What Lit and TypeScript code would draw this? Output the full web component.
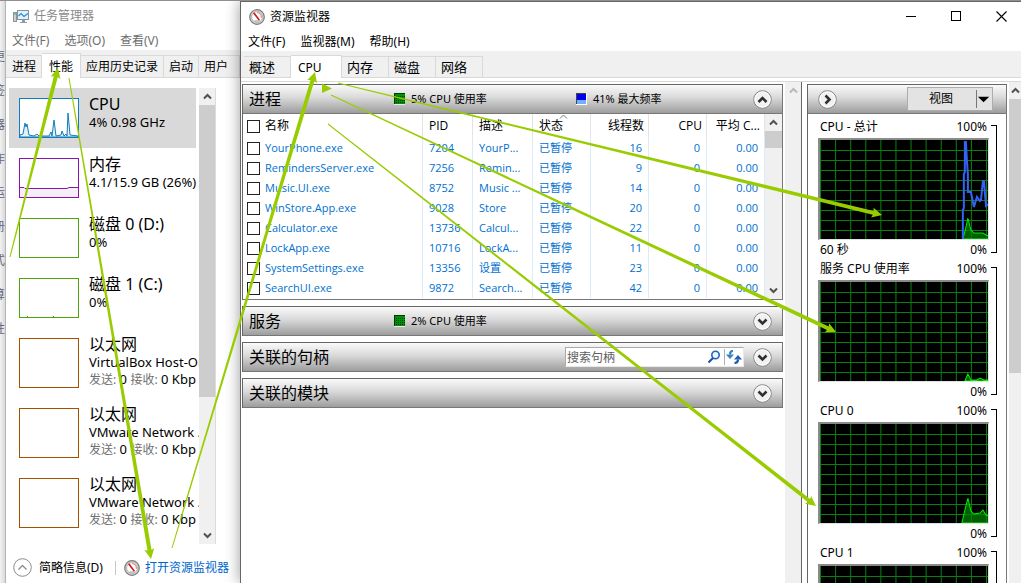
import { LitElement, html, svg, css } from "lit";
import { customElement, property } from "lit/decorators.js";

const reset = css`
  :host {
    display: block;
    box-sizing: border-box;
  }
  * {
    box-sizing: border-box;
  }
  button {
    font: inherit;
    color: inherit;
    background: none;
    border: 0;
    padding: 0;
    margin: 0;
    white-space: nowrap;
  }
  svg {
    display: block;
    flex: none;
  }
`;

const gauge = svg`
  <circle cx="8" cy="8" r="7.3" fill="#d4d4d4" stroke="#7c7c7c" stroke-width="1.2"/>
  <circle cx="8" cy="8" r="5.4" fill="#fff" stroke="#a8a8a8" stroke-width=".8"/>
  <path d="M8 3.6a4.500 4.500 0 0 1 4.300 5.200" fill="none" stroke="#e08060" stroke-width="1"/>
  <path d="M4 4.200 5.400 3.200 11 10.800 9.800 11.800Z" fill="#d01818"/>
  <path d="M5.500 12h5" stroke="#999" stroke-width="1"/>`;

const gaugeIcon = html`<svg width="16" height="16" viewBox="0 0 16 16" aria-hidden="true">${gauge}</svg>`;

@customElement("scroll-bar")
class ScrollBar extends LitElement {
  @property({ type: Number }) thumb = 0;
  @property({ type: Boolean }) idle = false;
  @property({ type: Boolean }) endless = false;
  static styles = [
    reset,
    css`
      :host {
        display: flex;
        flex-direction: column;
        background: #f0f0f0;
        flex: none;
        width: 16px;
        overflow: hidden;
      }
      .arrow {
        height: 17px;
        flex: none;
        display: flex;
        align-items: center;
        justify-content: center;
      }
      .thumb {
        background: #cdcdcd;
        flex: none;
      }
      .space {
        flex: 1;
        min-height: 0;
      }
    `,
  ];
  chevron(d: string) {
    return html`<svg width="9" height="7" viewBox="0 0 9 7" aria-hidden="true">
      <path d=${d} fill="none" stroke=${this.idle ? "#b8b8b8" : "#505050"} stroke-width="2" />
    </svg>`;
  }
  render() {
    return html`
      <button class="arrow" aria-label="向上滚动">${this.chevron("M1 5.5 4.5 2 8 5.5")}</button>
      <div class="thumb" style="height:${this.thumb}px"></div>
      <div class="space"></div>
      ${this.endless
        ? ""
        : html`<button class="arrow" aria-label="向下滚动">${this.chevron("M1 1.5 4.5 5 8 1.5")}</button>`}
    `;
  }
}

@customElement("round-button")
class RoundButton extends LitElement {
  @property() dir = "down";
  static styles = [
    reset,
    css`
      button {
        display: block;
      }
    `,
  ];
  render() {
    const d =
      this.dir === "up" ? "M5.5 12 9.5 8 13.5 12" : this.dir === "right" ? "M7.5 5.5 11.5 9.5 7.5 13.5" : "M5.5 7.5 9.5 11.5 13.5 7.5";
    return html`<button aria-label="展开或折叠">
      <svg width="19" height="19" viewBox="0 0 19 19" aria-hidden="true">
        <circle cx="9.5" cy="9.5" r="8.8" fill="#f1f1f1" stroke="#858585" />
        <circle cx="9.5" cy="9.5" r="7.6" fill="none" stroke="#fff" />
        <path d=${d} fill="none" stroke="#303030" stroke-width="2.6" />
      </svg>
    </button>`;
  }
}

interface Perf {
  title: string;
  lines: string[];
  net?: string[];
  color: string;
  kind?: string;
}

const PERF: Perf[] = [
  { title: "CPU", lines: ["4% 0.98 GHz"], color: "#117dbb", kind: "cpu" },
  { title: "内存", lines: ["4.1/15.9 GB (26%)"], color: "#8b12ae", kind: "mem" },
  { title: "磁盘 0 (D:)", lines: ["0%"], color: "#4da60c" },
  { title: "磁盘 1 (C:)", lines: ["0%"], color: "#4da60c", kind: "disk" },
  { title: "以太网", lines: ["VirtualBox Host-Or"], net: ["0", "0 Kbp"], color: "#a74f01" },
  { title: "以太网", lines: ["VMware Network ."], net: ["0", "0 Kbp"], color: "#a74f01" },
  { title: "以太网", lines: ["VMware Network ."], net: ["0", "0 Kbp"], color: "#a74f01" },
];

@customElement("task-manager")
class TaskManager extends LitElement {
  static styles = [
    reset,
    css`
      :host {
        display: flex;
        flex-direction: column;
        background: #fff;
        border-left: 1px solid #b4b4b4;
        overflow: hidden;
      }
      .title {
        display: flex;
        align-items: center;
        gap: 5px;
        height: 30px;
        padding-left: 7px;
        color: #8a8a8a;
      }
      .menu {
        display: flex;
        gap: 15px;
        height: 19px;
        padding-left: 6px;
        color: #6d6d6d;
        line-height: 20px;
      }
      .tabs {
        display: flex;
        align-items: flex-end;
        height: 28px;
        padding-left: 1px;
        background: #f0f0f0;
        border-bottom: 1px solid #d9d9d9;
      }
      .tab {
        height: 22px;
        padding: 0 5px;
        border: 1px solid #d9d9d9;
        border-bottom: 0;
        border-left: 0;
        line-height: 21px;
      }
      .tab.on {
        height: 25px;
        padding: 0 7px;
        background: #fff;
        margin-bottom: -1px;
      }
      .tab.last {
        flex: 1;
        text-align: left;
      }
      .body {
        display: flex;
        flex: 1;
        min-height: 0;
        margin: 10px 24px 0 3px;
        border-right: 1px solid #dcdcdc;
      }
      .list {
        flex: 1;
        min-width: 0;
        overflow: hidden;
      }
      .item {
        display: grid;
        grid-template-columns: 60px 1fr;
        column-gap: 10px;
        padding: 10px 0 10px 10px;
        height: 60px;
        white-space: nowrap;
      }
      .item.on {
        background: #d9d9d9;
        margin-right: 3px;
      }
      .item.net {
        height: 70px;
      }
      .thumb {
        width: 60px;
        height: 100%;
        overflow: visible;
      }
      .text {
        margin-top: -4px;
        min-width: 0;
      }
      .name {
        font-size: 16px;
        line-height: 20px;
      }
      .line {
        font-size: 13px;
        line-height: 17px;
      }
      .key {
        color: #707070;
        font-size: 12px;
      }
      .foot {
        display: flex;
        align-items: center;
        height: 39px;
        flex: none;
        padding: 8px 0 0 7px;
      }
      .fewer {
        display: flex;
        align-items: center;
        gap: 7px;
      }
      .bar {
        width: 1px;
        height: 14px;
        margin: 0 8px 0 12px;
        background: #c8c8c8;
      }
      .open {
        display: flex;
        align-items: center;
        gap: 5px;
        color: #0066cc;
        text-decoration: none;
        white-space: nowrap;
      }
    `,
  ];
  thumb(p: Perf) {
    const h = p.net ? 50 : 40;
    const inner =
      p.kind === "cpu"
        ? svg`<path d="M1 37 4 36 6 25 7 29 8 26 10 37 15 38 18 36 20 38 30 38 32 34 33 38 35 22 37 38 42 37 43 33 45 38 47 36 48 38 49 15 51 37 59 38V39H1Z" fill="#e3f0f8" stroke=${p.color}/>`
        : p.kind === "mem"
          ? svg`<path d="M1 29.5H5L6 30.5H48L50 29.5H59V39H1Z" fill="#f4eff7"/><path d="M1 29.5H5L6 30.5H48L50 29.5H59" fill="none" stroke=${p.color}/>`
          : p.kind === "disk"
            ? svg`<path d="M8 38.5h1M34 38.5h1" stroke=${p.color}/>`
            : "";
    return html`<svg class="thumb" viewBox="0 0 60 ${h}" aria-hidden="true">
      <rect x=".5" y=".5" width="59" height=${h - 1} fill="#fff" stroke=${p.color} />
      ${inner}
    </svg>`;
  }
  render() {
    return html`
      <div class="title">
        <svg width="16" height="16" viewBox="0 0 16 16" aria-hidden="true">
          <rect x=".5" y="4.500" width="3" height="9" fill="#c9d0d4" stroke="#8a949a" />
          <path d="M1 6h2" stroke="#4aa84a" />
          <rect x="4.500" y="2.500" width="11" height="9" fill="#dff1fa" stroke="#87939b" />
          <path d="M5.500 8 8 5.500 11 8.500 15 5.500" fill="none" stroke="#2b8fc4" stroke-width="1.200" />
          <path d="M9 12h3v2h2v1H7v-1h2Z" fill="#8f999f" />
        </svg>
        <span>任务管理器</span>
      </div>
      <nav class="menu">
        <button>文件(F)</button><button>选项(O)</button><button>查看(V)</button>
      </nav>
      <div class="tabs" role="tablist">
        <button class="tab" role="tab">进程</button>
        <button class="tab on" role="tab" aria-selected="true">性能</button>
        <button class="tab" role="tab">应用历史记录</button>
        <button class="tab" role="tab">启动</button>
        <button class="tab last" role="tab">用户</button>
      </div>
      <div class="body">
        <div class="list">
          ${PERF.map(
            (p, i) => html`<div class="item ${i === 0 ? "on" : ""} ${p.net ? "net" : ""}">
              ${this.thumb(p)}
              <div class="text">
                <div class="name">${p.title}</div>
                ${p.lines.map((l) => html`<div class="line">${l}</div>`)}
                ${p.net
                  ? html`<div class="line"><span class="key">发送:</span> ${p.net[0]} <span class="key">接收:</span> ${p.net[1]}</div>`
                  : ""}
              </div>
            </div>`
          )}
        </div>
        <scroll-bar thumb="292"></scroll-bar>
      </div>
      <div class="foot">
        <button class="fewer">
          <svg width="19" height="19" viewBox="0 0 19 19" aria-hidden="true">
            <circle cx="9.500" cy="9.500" r="8.800" fill="#fff" stroke="#8c8c8c" />
            <path d="M5.500 11.500 9.500 7.500 13.500 11.500" fill="none" stroke="#8c8c8c" stroke-width="1.300" />
          </svg>
          <span>简略信息(D)</span>
        </button>
        <span class="bar"></span>
        <a class="open" href="#">${gaugeIcon}<span>打开资源监视器</span></a>
      </div>
    `;
  }
}

const ROWS: [string, string, string, string][] = [
  ["YourPhone.exe", "7204", "YourP...", "16"],
  ["RemindersServer.exe", "7256", "Remin...", "9"],
  ["Music.UI.exe", "8752", "Music ...", "14"],
  ["WinStore.App.exe", "9028", "Store", "20"],
  ["Calculator.exe", "13736", "Calcul...", "22"],
  ["LockApp.exe", "10716", "LockA...", "11"],
  ["SystemSettings.exe", "13356", "设置", "23"],
  ["SearchUI.exe", "9872", "Search...", "42"],
];

@customElement("cpu-graph")
class CpuGraph extends LitElement {
  @property() label = "";
  @property() foot = "";
  @property() fillPath = "";
  @property() linePath = "";
  static styles = [
    reset,
    css`
      :host {
        display: flex;
        height: 142px;
        flex: none;
        padding: 0 9px 0 10px;
      }
      .main {
        flex: 1;
        min-width: 0;
      }
      .row {
        display: flex;
        justify-content: space-between;
        height: 20px;
        padding: 0 2px;
        line-height: 17px;
      }
      .row.low {
        line-height: 20px;
      }
      .plot {
        height: 102px;
        background: #000;
        border: solid #8a8a8a;
        border-width: 2px 0 0 2px;
        border-right: 1px solid #e0e0e0;
        border-bottom: 1px solid #e0e0e0;
      }
      .plot svg {
        width: 100%;
        height: 100%;
      }
      .bracket {
        flex: none;
        width: 6px;
        margin: 7px 0 7px 2px;
        border: 1px solid #000;
        border-left: 0;
      }
    `,
  ];
  render() {
    const vs = [0, 1, 2, 3, 4, 5, 6, 7, 8, 9, 10, 11];
    const hs = [1, 2, 3, 4, 5, 6, 7, 8, 9];
    return html`
      <div class="main">
        <div class="row"><span>${this.label}</span><span>100%</span></div>
        <div class="plot">
          <svg viewBox="0 0 167 99" preserveAspectRatio="none" aria-hidden="true">
            <path d=${this.fillPath} fill="#006000" />
            ${vs.map((i) => svg`<path d="M${i * 15 + 0.5} 0V99" stroke="#0a800f"/>`)}
            ${hs.map((i) => svg`<path d="M0 ${i * 10 + 0.5}H168" stroke="#0a800f"/>`)}
            <path d=${this.fillPath} fill="none" stroke="#00f000" />
            <path d=${this.linePath} fill="none" stroke="#3164f4" stroke-width="2" />
          </svg>
        </div>
        <div class="row low"><span>${this.foot}</span><span>0%</span></div>
      </div>
      <div class="bracket"></div>
    `;
  }
}

@customElement("resource-monitor")
class ResourceMonitor extends LitElement {
  static styles = [
    reset,
    css`
      :host {
        display: flex;
        flex-direction: column;
        background: #fff;
        border: solid #666;
        border-width: 1px 0 0 1px;
        min-width: 0;
        overflow: hidden;
      }
      .title {
        display: flex;
        align-items: center;
        height: 29px;
        gap: 5px;
        padding-left: 8px;
      }
      .title .name {
        flex: 1;
      }
      .ctl {
        display: flex;
        align-items: center;
        justify-content: center;
        width: 40px;
        height: 28px;
      }
      .menu {
        display: flex;
        gap: 15px;
        height: 20px;
        padding-left: 7px;
        line-height: 22px;
      }
      .tabs {
        display: flex;
        align-items: flex-end;
        height: 27px;
        padding-left: 3px;
        background: #f0f0f0;
        border-bottom: 1px solid #d9d9d9;
        flex: none;
      }
      .tab {
        width: 47px;
        height: 21px;
        padding: 0 0 0 5px;
        text-align: left;
        font-size: 13px;
        line-height: 19px;
        border: 1px solid #d9d9d9;
        border-bottom: 0;
        border-left: 0;
      }
      .tab.on {
        width: 51px;
        height: 23px;
        padding-left: 7px;
        font-size: 12px;
        background: #fff;
        margin-bottom: -1px;
      }
      .work {
        display: flex;
        flex: 1;
        min-height: 0;
        margin-top: 3px;
        border-top: 1px solid #d9d9d9;
      }
      .left {
        display: flex;
        flex-direction: column;
        gap: 6px;
        flex: 1;
        min-width: 0;
        padding: 2px 2px 0 1px;
      }
      .panel {
        border: 1px solid #666;
        border-right-color: #777;
        border-bottom-color: #777;
        flex: none;
      }
      .head {
        display: flex;
        align-items: center;
        height: 28px;
        padding: 0 10px 0 6px;
        background: linear-gradient(#fafafa, #d9d9d9 45%, #9d9d9d);
      }
      .head h2 {
        margin: 0;
        width: 145px;
        font-size: 16px;
        font-weight: 400;
        line-height: 28px;
        flex: none;
      }
      .legend {
        display: flex;
        flex: none;
        align-items: center;
        gap: 6px;
        width: 182px;
        font-size: 11px;
        white-space: nowrap;
      }
      .legend.tail {
        width: auto;
      }
      .grow {
        flex: 1;
      }
      .search {
        display: flex;
        align-items: center;
        width: 179px;
        height: 20px;
        margin-right: 9px;
        background: #fff;
        border: 1px solid #aaa;
        border-right-color: #e8e8e8;
        border-bottom-color: #e8e8e8;
      }
      .search input {
        flex: 1;
        min-width: 0;
        height: 18px;
        padding: 0 1px;
        border: 0;
        outline: 0;
        background: none;
        font: inherit;
      }
      .search input::placeholder {
        color: #606060;
        opacity: 1;
      }
      .search .go {
        width: 18px;
        height: 16px;
        border-right: 1px solid #b0b0b0;
      }
      .tablewrap {
        display: flex;
        border-top: 1px solid #777;
        height: 186px;
      }
      .scroll {
        flex: 1;
        min-width: 0;
        overflow: hidden;
      }
      .rows {
        width: 17px;
      }
      table {
        width: 100%;
        table-layout: fixed;
        border-collapse: separate;
        border-spacing: 0;
        font-family: "Open Sans", "Noto Sans CJK SC", sans-serif;
      }
      th,
      td {
        padding: 0 2px 0 6px;
        height: 20px;
        border-right: 1px solid #dcebfb;
        text-align: left;
        font-weight: 400;
        white-space: nowrap;
        line-height: 20px;
      }
      th {
        height: 24px;
        line-height: 24px;
        border-right-color: #e3e3e3;
      }
      td {
        color: #0070d0;
        font-size: 11px;
      }
      th:first-child,
      td:first-child {
        padding: 0 0 0 4px;
      }
      th.n {
        text-align: right;
        padding: 0 4px 0 0;
      }
      td.n {
        text-align: right;
        padding: 0 6px 0 0;
      }
      .c-id {
        width: 50px;
      }
      .c-ds {
        width: 60px;
      }
      .c-n {
        width: 58px;
      }
      label {
        display: flex;
        align-items: center;
        gap: 5px;
      }
      input[type="checkbox"] {
        appearance: none;
        width: 13px;
        height: 13px;
        margin: 0;
        border: 1px solid #222;
        background: #fff;
        flex: none;
      }
      .sorted {
        position: relative;
      }
      .sorted svg {
        position: absolute;
        left: 26px;
        top: 0;
      }
      .right {
        display: flex;
        flex: none;
        width: 220px;
        border-left: 1px solid #666;
      }
      .graphs {
        flex: 1;
        min-width: 0;
        margin: 2px 2px 0 5px;
        border: 1px solid #666;
        border-right-color: #777;
        border-bottom: 0;
        overflow: hidden;
      }
      .graphs .head {
        height: 29px;
        padding: 0 13px 0 10px;
        margin-bottom: 4px;
        border-bottom: 1px solid #777;
        justify-content: space-between;
      }
      .view {
        display: flex;
        align-items: center;
        width: 86px;
        height: 24px;
        background: #e3e3e3;
        border: 1px solid #adadad;
      }
      .view span {
        flex: 1;
        line-height: 22px;
        padding-right: 2px;
      }
      .view svg {
        border-left: 1px solid #777;
      }
      .outer {
        width: 12px;
      }
    `,
  ];
  green = html`<svg width="11" height="12" viewBox="0 0 11 12" aria-hidden="true">
    <rect width="11" height="12" fill="#00900a" />
    <path d="M0 .5h11M.5 0v11" stroke="#003c00" />
    <path d="M2 3.500h9M2 5.500h9M2 7.500h9M2 9.500h9" stroke="#003c00" stroke-dasharray="1 1" />
    <path d="M0 11.500h11" stroke="#e8e8e8" />
  </svg>`;
  blue = html`<svg width="11" height="12" viewBox="0 0 11 12" aria-hidden="true">
    <rect width="11" height="7" fill="#0000f0" />
    <rect y="7" width="11" height="5" fill="#70b0ff" />
    <path d="M0 .5h11M.5 0v12" stroke="#444" />
    <path d="M0 11.500h11M10.500 0v12" stroke="#fff" />
  </svg>`;
  render() {
    return html`
      <div class="title">
        ${gaugeIcon}<span class="name">资源监视器</span>
        <button class="ctl" aria-label="最小化">
          <svg width="11" height="11" viewBox="0 0 11 11"><path d="M0 5.500h10" stroke="#000" /></svg>
        </button>
        <button class="ctl" aria-label="最大化">
          <svg width="11" height="11" viewBox="0 0 11 11"><rect x=".5" y=".5" width="9" height="9" fill="none" stroke="#000" /></svg>
        </button>
        <button class="ctl" aria-label="关闭">
          <svg width="11" height="11" viewBox="0 0 11 11"><path d="M.5.500l10 10M10.500.500l-10 10" stroke="#000" stroke-width="1.100" /></svg>
        </button>
      </div>
      <nav class="menu">
        <button>文件(F)</button><button>监视器(M)</button><button>帮助(H)</button>
      </nav>
      <div class="tabs" role="tablist">
        <button class="tab" role="tab">概述</button>
        <button class="tab on" role="tab" aria-selected="true">CPU</button>
        <button class="tab" role="tab">内存</button>
        <button class="tab" role="tab">磁盘</button>
        <button class="tab" role="tab">网络</button>
      </div>
      <div class="work">
        <div class="left">
          <section class="panel">
            <div class="head">
              <h2>进程</h2>
              <span class="legend">${this.green}<span>5% CPU 使用率</span></span>
              <span class="legend tail">${this.blue}<span>41% 最大频率</span></span>
              <span class="grow"></span>
              <round-button dir="up"></round-button>
            </div>
            <div class="tablewrap">
              <div class="scroll">
                <table>
                  <colgroup>
                    <col />
                    <col class="c-id" />
                    <col class="c-ds" />
                    <col class="c-n" />
                    <col class="c-n" />
                    <col class="c-n" />
                    <col class="c-n" />
                  </colgroup>
                  <thead>
                    <tr>
                      <th><label><input type="checkbox" />名称</label></th>
                      <th>PID</th>
                      <th>描述</th>
                      <th class="sorted">
                        状态
                        <svg width="9" height="5" viewBox="0 0 9 5"><path d="M1 4.500 4.500 1 8 4.500" fill="none" stroke="#777" /></svg>
                      </th>
                      <th class="n">线程数</th>
                      <th class="n">CPU</th>
                      <th class="n">平均 C...</th>
                    </tr>
                  </thead>
                  <tbody>
                    ${ROWS.map(
                      (r) => html`<tr>
                        <td><label><input type="checkbox" />${r[0]}</label></td>
                        <td>${r[1]}</td>
                        <td>${r[2]}</td>
                        <td>已暂停</td>
                        <td class="n">${r[3]}</td>
                        <td class="n">0</td>
                        <td class="n">0.00</td>
                      </tr>`
                    )}
                  </tbody>
                </table>
              </div>
              <scroll-bar class="rows" thumb="17"></scroll-bar>
            </div>
          </section>
          <section class="panel">
            <div class="head">
              <h2>服务</h2>
              <span class="legend">${this.green}<span>2% CPU 使用率</span></span>
              <span class="grow"></span>
              <round-button></round-button>
            </div>
          </section>
          <section class="panel">
            <div class="head">
              <h2>关联的句柄</h2>
              <span class="grow"></span>
              <div class="search">
                <input type="text" placeholder="搜索句柄" aria-label="搜索句柄" />
                <button class="go" aria-label="搜索">
                  <svg width="14" height="14" viewBox="0 0 14 14">
                    <circle cx="8.500" cy="5" r="3.700" fill="#eaf5ff" stroke="#2563b8" stroke-width="1.600" />
                    <path d="M6 8 1.500 12.500" stroke="#1d4fa8" stroke-width="2.200" />
                  </svg>
                </button>
                <button aria-label="刷新">
                  <svg width="18" height="14" viewBox="0 0 18 14">
                    <path d="M8 1Q5 1 5 4.500" fill="none" stroke="#2f83cc" stroke-width="2.200" />
                    <path d="M1 4.500h8L5 9Z" fill="#2f83cc" />
                    <path d="M9.500 13Q13 13 13 9.500" fill="none" stroke="#1f5fb0" stroke-width="2.200" />
                    <path d="M9 9.500h8L13 5Z" fill="#1f5fb0" />
                  </svg>
                </button>
              </div>
              <round-button></round-button>
            </div>
          </section>
          <section class="panel">
            <div class="head">
              <h2>关联的模块</h2>
              <span class="grow"></span>
              <round-button></round-button>
            </div>
          </section>
        </div>
        <scroll-bar idle endless></scroll-bar>
        <div class="right">
          <div class="graphs">
            <div class="head">
              <round-button dir="right"></round-button>
              <button class="view">
                <span>视图</span>
                <svg width="16" height="18" viewBox="0 0 16 18"><path d="M1 6.500h12L7 12.500Z" fill="#000" /></svg>
              </button>
            </div>
            <cpu-graph
              label="CPU - 总计"
              foot="60 秒"
              fillPath="M142 99 144 92 147 78 150 90 153 93 162 93 165 95 168 96V99Z"
              linePath="M142 99V70L143 68V34L144 32V2H145L146 20 147 34V52H150L153 67 156 57 159 61 160 60 162 41H163L165 66 168 64"
            ></cpu-graph>
            <cpu-graph label="服务 CPU 使用率" fillPath="M144 99 147 92 150 98 156 98 159 96 163 98 168 98V99Z"></cpu-graph>
            <cpu-graph label="CPU 0" fillPath="M141 99 144 86 147 74 150 87 153 90 159 89 162 86 165 91 168 92V99Z"></cpu-graph>
            <cpu-graph label="CPU 1"></cpu-graph>
          </div>
          <scroll-bar class="outer" thumb="274" endless></scroll-bar>
        </div>
      </div>
    `;
  }
}

type Pt = [number, number];
const ARROWS: { from: Pt; to: Pt }[] = [
  { from: [10, 257], to: [58, 68] },
  { from: [69, 78], to: [151, 559] },
  { from: [172, 548], to: [315, 72] },
  { from: [338, 83], to: [882, 215] },
  { from: [331, 95], to: [836, 332] },
  { from: [328, 124], to: [816, 506] },
];

/** Tapered arrow: the shaft widens from the tail towards the head. */
function arrowPoints(from: Pt, to: Pt): string {
  const len = Math.hypot(to[0] - from[0], to[1] - from[1]);
  const ux = (to[0] - from[0]) / len;
  const uy = (to[1] - from[1]) / len;
  const at = (d: number, w: number) => `${(from[0] + ux * d - uy * w).toFixed(1)},${(from[1] + uy * d + ux * w).toFixed(1)}`;
  const neck = len - 9;
  return [at(0, 0.5), at(neck, 2), at(neck - 1, 5), at(len, 0), at(neck - 1, -5), at(neck, -2), at(0, -0.5)].join(" ");
}

@customElement("app-root")
class AppRoot extends LitElement {
  static styles = [
    reset,
    css`
      :host {
        display: flex;
        position: relative;
        height: 100vh;
        overflow: hidden;
        background: #f4f4f4;
        border-top: 1px solid #8f8f8f;
        font-family: "Noto Sans", "Noto Sans CJK SC", sans-serif;
        font-size: 12px;
        line-height: 16px;
        color: #000;
      }
      .behind {
        flex: none;
        display: flex;
        flex-direction: column;
        width: 5px;
        padding-top: 48px;
        overflow: hidden;
        align-items: flex-end;
        background: linear-gradient(90deg, #f2f2f2, #dadada);
        color: #667;
        gap: 18px;
      }
      task-manager {
        flex: none;
        width: 235px;
      }
      resource-monitor {
        flex: 1;
        box-shadow: 0 0 14px rgba(0, 0, 0, 0.4);
      }
      .marks {
        position: absolute;
        left: 0;
        top: -1px;
        pointer-events: none;
      }
    `,
  ];
  render() {
    return html`
      <div class="behind" aria-hidden="true">
        <span>更</span><span>签</span><span>器</span><span>作</span><span>运</span><span>册</span><span>式</span><span>算</span><span>性</span>
      </div>
      <task-manager></task-manager>
      <resource-monitor></resource-monitor>
      <svg class="marks" width="1021" height="583" viewBox="0 0 1021 583" aria-hidden="true">
        ${ARROWS.map((a) => svg`<polygon points=${arrowPoints(a.from, a.to)} fill="#99cc00"/>`)}
        <path d="M322 83.500 332 88.500 322 93Z" fill="#99cc00" />
      </svg>
    `;
  }
}
